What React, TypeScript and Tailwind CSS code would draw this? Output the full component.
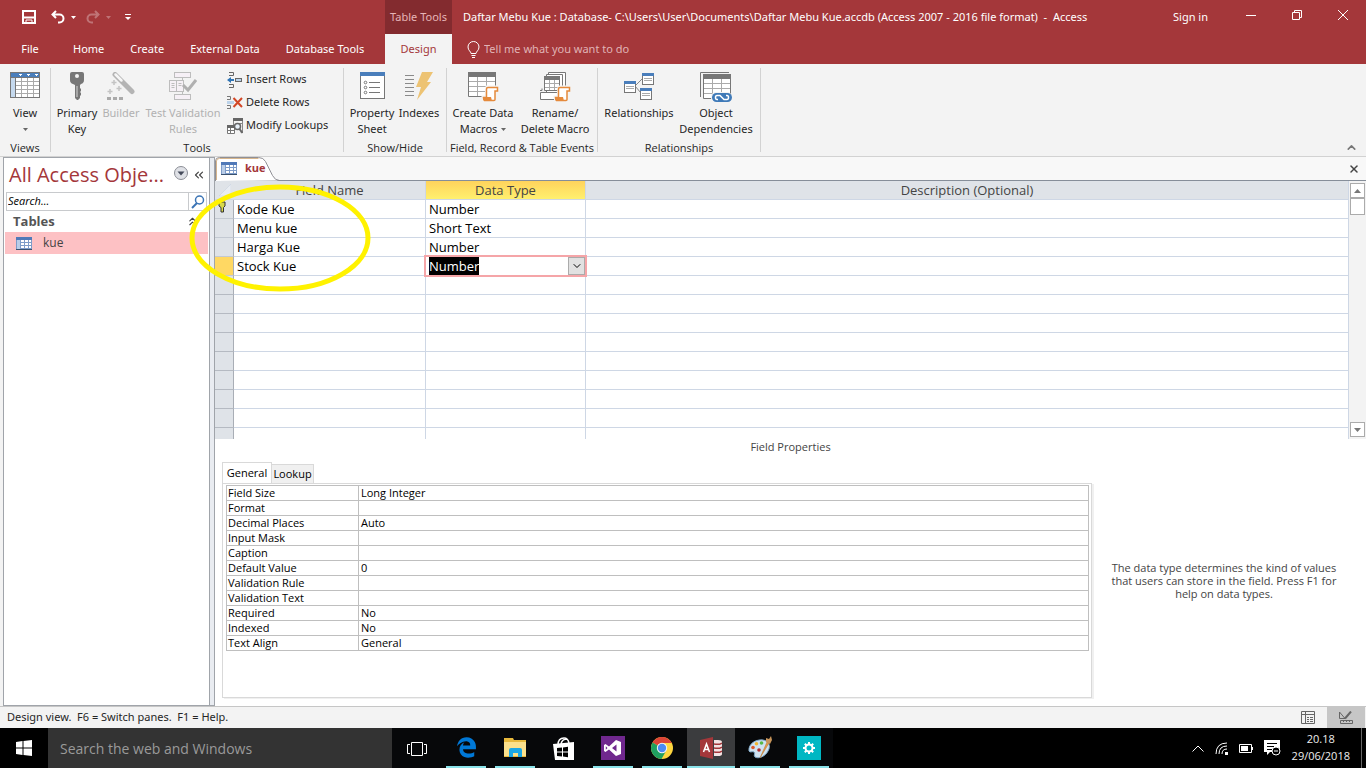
import { ReactNode } from 'react';
import { ChevronDown, ChevronUp, ChevronsLeft, ChevronsUp, X } from 'lucide-react';
import { FaEdgeLegacy } from 'react-icons/fa6';

interface Field {
    name: string;
    type: string;
    primary?: boolean;
}

const fields: Field[] = [
    { name: 'Kode Kue', type: 'Number', primary: true },
    { name: 'Menu kue', type: 'Short Text' },
    { name: 'Harga Kue', type: 'Number' },
    { name: 'Stock Kue', type: 'Number' },
];

const activeRow = 3;
const emptyRows = 9;

const properties = [
    ['Field Size', 'Long Integer'],
    ['Format', ''],
    ['Decimal Places', 'Auto'],
    ['Input Mask', ''],
    ['Caption', ''],
    ['Default Value', '0'],
    ['Validation Rule', ''],
    ['Validation Text', ''],
    ['Required', 'No'],
    ['Indexed', 'No'],
    ['Text Align', 'General'],
];

const menuTabs = ['Home', 'Create', 'External Data', 'Database Tools'];

/* ---------- ribbon icons ---------- */

function ViewIcon() {
    return (
        <svg width="30" height="26" viewBox="0 0 30 26" shapeRendering="crispEdges">
            <rect width="30" height="26" fill="#777" />
            <rect x="1" y="1" width="28" height="4" fill="#4a7ebb" />
            <rect x="1" y="6" width="4" height="19" fill="#c5d9ee" />
            <rect x="6" y="6" width="23" height="19" fill="#aaa" />
            {[6, 12, 18, 24].map((x) =>
                [6, 10, 14, 18, 22].map((y) => (
                    <rect key={`${x}-${y}`} x={x} y={y} width="5" height="3" fill="#fff" />
                )),
            )}
            <path d="M8 2h4l-2 2zM16 2h4l-2 2zM24 2h4l-2 2z" fill="#fff" />
        </svg>
    );
}

function KeyIcon() {
    return (
        <svg width="14" height="28" viewBox="0 0 14 28">
            <path
                d="M2 0h10q2 0 2 2v6q0 3-3 4l-1 1v3l1 1v2l-1 1 1 1v2l-1 1v2l-2 2H7l-2-2V13L3 12Q0 11 0 8V2q0-2 2-2z"
                fill="#777"
            />
            <circle cx="7" cy="4" r="2" fill="#f3f3f3" />
            <path d="M7 14v11" stroke="#d8d8d8" strokeWidth="1" />
        </svg>
    );
}

function BuilderIcon() {
    return (
        <svg width="30" height="28" viewBox="0 0 30 28" fill="none">
            <path d="M9 2.500l17 17" stroke="#b4b4b4" strokeWidth="5" strokeLinecap="round" />
            <path d="M9.500 2.500l6 6" stroke="#f6f6f6" strokeWidth="2.500" strokeLinecap="round" />
            <path
                d="M8 8v5M5.500 10.500h5M13 14v5M10.500 16.500h5M4 17v5M1.500 19.500h5"
                stroke="#c4c4c4"
                strokeWidth="1.500"
            />
            <path d="M1 25h4v3H1zM7 25h4v3H7zM13 25h4v3h-4z" fill="#aaa" />
        </svg>
    );
}

function ValidationIcon() {
    return (
        <svg width="28" height="28" viewBox="0 0 28 28" fill="#f6f0f6" stroke="#bdbdbd">
            <path d="M13.500 5v18" fill="none" />
            <rect x="5.500" y=".5" width="16" height="5" />
            <rect x="5.500" y="22.500" width="16" height="5" />
            <rect x=".5" y="8.500" width="14" height="11" />
            <path d="M7.500 8.500v11M2.500 11.500h3M2.500 13.500h3M2.500 15.500h3M9.500 11.500h3M9.500 13.500h3" fill="none" />
            <path d="M14 13l5 5 8-10" fill="none" stroke="#b0b0b0" strokeWidth="3" />
        </svg>
    );
}

function InsertRowsIcon() {
    return (
        <svg width="16" height="16" viewBox="0 0 16 16" fill="none" stroke="#666">
            <path d="M2 .5h4.500v3H2M2 15.500h4.500v-3H2" />
            <path d="M0 8l4-3v2h3v2H4v2z" fill="#2f74b5" stroke="none" />
            <rect x="8.500" y="6.500" width="6" height="3" fill="#bcd3ea" />
        </svg>
    );
}

function DeleteRowsIcon() {
    return (
        <svg width="16" height="14" viewBox="0 0 16 14" fill="none" stroke="#777">
            <path d="M0 .5h3.500v3H0M0 12.500h3.500v-3H0" />
            <rect x="0" y="5" width="7" height="3" fill="#bcd3ea" stroke="none" />
            <path d="M6.500 2l8.500 9M15 2l-8.500 9" stroke="#d24726" strokeWidth="2" />
        </svg>
    );
}

function LookupIcon() {
    return (
        <svg width="16" height="16" viewBox="0 0 16 16" fill="none">
            <path d="M6 0h10v3H6z" fill="#666" />
            <path d="M6.500 3v4M15.500 3v11h-2M9 5.500h6" stroke="#888" />
            <path d="M.5 8.500h7v7h-7z" fill="#fff" stroke="#777" />
            <path d="M0 7h7v3H0z" fill="#666" />
            <path d="M0 12.500h8M3.500 10v6" stroke="#777" />
            <circle cx="10.500" cy="8.500" r="3" fill="#e8f1fa" stroke="#666" strokeWidth="1.500" />
            <path d="M12.500 11l3 4" stroke="#666" strokeWidth="2" />
        </svg>
    );
}

function PropertyIcon() {
    return (
        <svg width="25" height="27" viewBox="0 0 25 27">
            <rect x=".5" y=".5" width="24" height="26" fill="#fff" stroke="#777" />
            <rect width="25" height="4" fill="#4a7ebb" />
            <g fill="none" stroke="#777">
                <circle cx="5.500" cy="10.500" r="1.300" />
                <circle cx="5.500" cy="15.500" r="1.300" />
                <circle cx="5.500" cy="20.500" r="1.300" />
                <path d="M9 10.500h11M9 15.500h11M9 20.500h11" />
            </g>
        </svg>
    );
}

function IndexesIcon() {
    return (
        <svg width="28" height="28" viewBox="0 0 28 28">
            <path
                d="M0 3.500h9M0 7.500h9M0 11.500h9M0 15.500h9M0 19.500h9M0 23.500h9"
                stroke="#8a8a8a"
                fill="none"
            />
            <path d="M17 0h11l-6 10h4L12 28l4-13h-5z" fill="#edc373" />
        </svg>
    );
}

function Scroll() {
    return (
        <>
            <path d="M19 15h11v4h-2v10H17q-2-1-2-4h3z" fill="#fff" stroke="#f3f3f3" strokeWidth="3" />
            <path
                d="M18.500 25.500V17q0-1.500 1.500-1.500h9.500V19H27v8.500q0 1-1 1H16.500q-1-1-1-3z"
                fill="#fff"
                stroke="#e58a3c"
                strokeWidth="1.500"
            />
            <path d="M15 25h8l1 4h-7q-2-1-2-4z" fill="#e58a3c" />
        </>
    );
}

function DataMacroIcon() {
    return (
        <svg width="31" height="30" viewBox="0 0 31 30">
            <path d="M.5.5h27v24H.5z" fill="#fff" stroke="#777" />
            <path d="M1 9.500h26M1 14.500h26M1 19.500h26M9.500 5v19M18.500 5v19" stroke="#aaa" />
            <path d="M0 0h28v5H0z" fill="#777" />
            <Scroll />
        </svg>
    );
}

function RenameIcon() {
    return (
        <svg width="31" height="30" viewBox="0 0 31 30">
            <path d="M8.500.5h17v20h-17z" fill="#fff" stroke="#777" />
            <path d="M6.500 2.500h16v18h-16z" fill="#fff" stroke="#777" />
            <path d="M4.500 4.500h15v14h-15z" fill="#fff" stroke="#777" />
            <path d="M5 11.500h14M5 15.500h14M9.500 8v10M14.500 8v10" stroke="#aaa" />
            <path d="M4 4h16v4H4z" fill="#777" />
            <path d="M.5 20.500h17v7H.5z" fill="#fff" stroke="#777" />
            <path d="M0 18.500h2v-2" fill="none" stroke="#777" />
            <Scroll />
        </svg>
    );
}

function RelationshipsIcon() {
    return (
        <svg width="30" height="28" viewBox="0 0 30 28">
            <path d="M11 14l8-8M11 14l6 7" stroke="#888" />
            {[
                [0, 9],
                [18, 1],
                [16, 16],
            ].map(([x, y]) => (
                <g key={x}>
                    <rect x={x + 0.5} y={y + 0.5} width="11" height="11" fill="#fff" stroke="#777" />
                    <rect x={x} y={y} width="12" height="3" fill="#4a7ebb" />
                    <path d={`M${x + 2} ${y + 5.5}h8M${x + 2} ${y + 7.5}h8`} stroke="#aaa" />
                </g>
            ))}
        </svg>
    );
}

function DependenciesIcon() {
    return (
        <svg width="32" height="31" viewBox="0 0 32 31">
            <path d="M.5 25V.5H29" fill="none" stroke="#777" />
            <path d="M3.500 2.500h27v24h-27z" fill="#fff" stroke="#777" />
            <path d="M4 11.500h26M4 16.500h26M4 21.500h26M12.500 7v19M21.500 7v19" stroke="#aaa" />
            <path d="M3 2h28v5H3z" fill="#777" />
            <rect x="11" y="20" width="21" height="11" rx="5" fill="#f3f3f3" />
            <rect x="12" y="21" width="20" height="9" rx="4.500" fill="#3f7ab8" />
            <path
                d="M18 27.500h-1q-1.500 0-1.500-2t1.500-2h3l4 4h3q1.500 0 1.500-2t-1.500-2h-1"
                fill="none"
                stroke="#fff"
                strokeWidth="1.500"
            />
        </svg>
    );
}

function SheetIcon() {
    return (
        <svg width="16" height="13" viewBox="0 0 16 13" shapeRendering="crispEdges">
            <rect width="16" height="13" fill="#7d9cc9" />
            <rect width="16" height="3" fill="#5079b8" />
            <rect x="1" y="3" width="3" height="9" fill="#b9cde8" />
            {[5, 9, 13].map((x) =>
                [3, 6, 9].map((y) => (
                    <rect key={`${x}-${y}`} x={x} y={y} width={x === 13 ? 2 : 3} height="2" fill="#fff" />
                )),
            )}
            <rect y="12" width="16" height="1" fill="#39516f" />
        </svg>
    );
}

/* ---------- ribbon pieces ---------- */

interface RibbonButtonProps {
    icon: ReactNode;
    label: string;
    second?: string;
    caret?: boolean;
    disabled?: boolean;
    width: string;
}

function Caret() {
    return (
        <svg width="5" height="3" viewBox="0 0 5 3" className="shrink-0">
            <path d="M0 0h5L2.500 3z" fill="#666" />
        </svg>
    );
}

function RibbonButton({ icon, label, second, caret, disabled, width }: RibbonButtonProps) {
    return (
        <button
            type="button"
            disabled={disabled}
            className={`flex flex-col items-center leading-4 whitespace-nowrap disabled:text-[#b1b1b1] ${width}`}
        >
            <span className="flex h-[37px] items-start pt-1">{icon}</span>
            <span>{label}</span>
            <span className="flex h-4 items-center gap-1">
                {second}
                {caret && <Caret />}
            </span>
        </button>
    );
}

function RibbonGroup({ title, children }: { title: string; children: ReactNode }) {
    return (
        <section className="flex">
            <div className="flex flex-col justify-between pt-1">
                <div className="flex">{children}</div>
                <h2 className="text-center font-['Open_Sans',sans-serif] leading-4 whitespace-nowrap">{title}</h2>
            </div>
            <div className="my-1 w-px bg-[#d2d2d2]" />
        </section>
    );
}

function SmallCommand({ icon, label }: { icon: ReactNode; label: string }) {
    return (
        <button type="button" className="flex h-[23px] items-center gap-[3px] whitespace-nowrap">
            <span className="flex w-4 justify-center">{icon}</span>
            {label}
        </button>
    );
}

/* ---------- window sections ---------- */

function TitleBar() {
    return (
        <header className="bg-[#a4373a] font-['Noto_Sans',sans-serif] text-[11px] text-white">
            <div className="flex h-[34px]">
                <div className="flex w-[385px] shrink-0 items-center pl-[22px]">
                    <button type="button" aria-label="Save">
                        <svg width="14" height="14" viewBox="0 0 14 14" fill="none" stroke="#fff" strokeWidth="2">
                            <path d="M1 1h12v12H1zM2 7.500h10" />
                            <path d="M4 13v-3h6v3" strokeWidth="1" />
                        </svg>
                    </button>
                    <button type="button" aria-label="Undo" className="ml-[15px] flex items-center gap-[6px]">
                        <svg width="14" height="14" viewBox="0 0 14 14" fill="none" stroke="#fff" strokeWidth="2">
                            <path d="M5 1L1.500 4.500 5 8M2 4.500h6.500a4 4 0 0 1 0 8H7" />
                        </svg>
                        <svg width="5" height="3" viewBox="0 0 5 3">
                            <path d="M0 0h5L2.500 3z" fill="#fff" />
                        </svg>
                    </button>
                    <button
                        type="button"
                        disabled
                        aria-label="Redo"
                        className="ml-[10px] flex items-center gap-[6px] opacity-30"
                    >
                        <svg width="14" height="14" viewBox="0 0 14 14" fill="none" stroke="#fff" strokeWidth="2">
                            <path d="M9 1l3.500 3.500L9 8M12 4.500H5.500a4 4 0 0 0 0 8H7" />
                        </svg>
                        <svg width="5" height="3" viewBox="0 0 5 3">
                            <path d="M0 0h5L2.500 3z" fill="#fff" />
                        </svg>
                    </button>
                    <button type="button" aria-label="Customize Quick Access Toolbar" className="ml-[14px]">
                        <svg width="6" height="6" viewBox="0 0 6 6">
                            <path d="M0 .5h6" stroke="#fff" />
                            <path d="M0 3h6L3 6z" fill="#fff" />
                        </svg>
                    </button>
                </div>
                <div className="flex w-[67px] shrink-0 items-center justify-center bg-[#832b2f] whitespace-nowrap text-[#e6b5b7]">
                    Table Tools
                </div>
                <h1 className="flex-1 self-center pl-[11px] whitespace-pre">
                    {'Daftar Mebu Kue : Database- C:\\Users\\User\\Documents\\Daftar Mebu Kue.accdb (Access 2007 - 2016 file format)  -  Access'}
                </h1>
                <button type="button" className="mr-5 whitespace-nowrap">
                    Sign in
                </button>
                <button type="button" aria-label="Minimize" className="flex w-[46px] items-center justify-center">
                    <svg width="10" height="10" viewBox="0 0 10 10">
                        <path d="M0 3.500h10" stroke="#fff" />
                    </svg>
                </button>
                <button type="button" aria-label="Restore" className="flex w-[46px] items-center justify-center pb-1">
                    <svg width="10" height="10" viewBox="0 0 10 10" fill="none" stroke="#fff">
                        <path d="M.5 2.500h7v7h-7zM2.500 2.500v-2h7v7h-2" />
                    </svg>
                </button>
                <button type="button" aria-label="Close" className="flex w-[46px] items-center justify-center pb-1">
                    <svg width="10" height="10" viewBox="0 0 10 10">
                        <path d="M0 0l10 10M10 0L0 10" stroke="#fff" />
                    </svg>
                </button>
            </div>
            <nav className="flex h-[30px]">
                <div className="flex w-[385px] shrink-0 items-center whitespace-nowrap">
                    <button type="button" className="w-[60px]">
                        File
                    </button>
                    {menuTabs.map((tab) => (
                        <button key={tab} type="button" className="px-[13px]">
                            {tab}
                        </button>
                    ))}
                </div>
                <button type="button" className="w-[67px] shrink-0 bg-[#f3f3f3] text-[#a4373a]">
                    Design
                </button>
                <label className="flex flex-1 items-center gap-1 pl-[15px]">
                    <svg width="13" height="17" viewBox="0 0 13 17" fill="none" stroke="#fff">
                        <path d="M4 12.500c0-2-3-3-3-6.500a5.500 5.500 0 0 1 11 0c0 3.500-3 4.500-3 6.500zM4.500 14.500h4M5 16.500h3" />
                    </svg>
                    <input
                        type="text"
                        aria-label="Tell me what you want to do"
                        placeholder="Tell me what you want to do"
                        className="w-60 bg-transparent placeholder:text-[#e0b4b6]"
                    />
                </label>
            </nav>
        </header>
    );
}

function Ribbon() {
    return (
        <div className="flex h-[93px] border-b border-[#d2d2d2] bg-[#f3f3f3] font-['Noto_Sans',sans-serif] text-[11px] text-[#262626]">
            <RibbonGroup title="Views">
                <RibbonButton icon={<ViewIcon />} label="View" caret width="w-[50px]" />
            </RibbonGroup>
            <RibbonGroup title="Tools">
                <div className="flex w-[292px] pl-1">
                    <RibbonButton icon={<KeyIcon />} label="Primary" second="Key" width="w-[44px]" />
                    <RibbonButton icon={<BuilderIcon />} label="Builder" disabled width="w-[44px]" />
                    <RibbonButton icon={<ValidationIcon />} label="Test Validation" second="Rules" disabled width="w-[80px]" />
                    <div className="flex flex-col pl-1">
                        <SmallCommand icon={<InsertRowsIcon />} label="Insert Rows" />
                        <SmallCommand icon={<DeleteRowsIcon />} label="Delete Rows" />
                        <SmallCommand icon={<LookupIcon />} label="Modify Lookups" />
                    </div>
                </div>
            </RibbonGroup>
            <RibbonGroup title="Show/Hide">
                <div className="flex w-[102px] pl-1">
                    <RibbonButton icon={<PropertyIcon />} label="Property" second="Sheet" width="w-[48px]" />
                    <RibbonButton icon={<IndexesIcon />} label="Indexes" width="w-[46px]" />
                </div>
            </RibbonGroup>
            <RibbonGroup title="Field, Record &amp; Table Events">
                <div className="flex w-[150px]">
                    <RibbonButton icon={<DataMacroIcon />} label="Create Data" second="Macros" caret width="w-[72px]" />
                    <RibbonButton icon={<RenameIcon />} label="Rename/" second="Delete Macro" width="w-[72px]" />
                </div>
            </RibbonGroup>
            <RibbonGroup title="Relationships">
                <div className="flex w-[162px] pl-[2px]">
                    <RibbonButton icon={<RelationshipsIcon />} label="Relationships" width="w-[78px]" />
                    <RibbonButton icon={<DependenciesIcon />} label="Object" second="Dependencies" width="w-[76px]" />
                </div>
            </RibbonGroup>
            <button type="button" aria-label="Collapse the Ribbon" className="mr-2 mb-[2px] ml-auto self-end">
                <ChevronUp size={13} strokeWidth={3} className="text-[#777]" />
            </button>
        </div>
    );
}

function NavigationPane() {
    return (
        <aside className="ml-[3px] flex w-[212px] shrink-0 border border-[#a0a4aa] bg-[#e9ecf1]">
            <div className="flex min-w-0 flex-1 flex-col border-r border-[#a0a4aa] bg-white">
                <div className="flex h-[34px] items-center pr-[3px] pl-[5px] text-[#a4373a]">
                    <h2 className="flex-1 text-[20px] leading-8 whitespace-nowrap">All Access Obje...</h2>
                    <button type="button" aria-label="Choose category" className="mr-1 mb-1">
                        <svg width="14" height="14" viewBox="0 0 14 14">
                            <circle cx="7" cy="7" r="6.500" fill="#dfe1e6" stroke="#8b8e96" />
                            <path d="M3.500 5.500h7L7 9.500z" fill="#444a5a" />
                        </svg>
                    </button>
                    <button type="button" aria-label="Shutter bar">
                        <ChevronsLeft size={14} className="text-[#444]" />
                    </button>
                </div>
                <form className="mx-[2px] flex h-[19px] border border-[#c8cacd]">
                    <input
                        type="text"
                        aria-label="Search"
                        placeholder="Search..."
                        className="min-w-0 flex-1 pl-px text-[11px] italic placeholder:text-black"
                    />
                    <button type="button" aria-label="Find" className="flex w-[18px] items-center justify-center border-l border-[#c8cacd]">
                        <svg width="14" height="14" viewBox="0 0 14 14" fill="none" stroke="#3b74b5">
                            <circle cx="8.500" cy="5" r="4" strokeWidth="1.500" />
                            <path d="M6 8l-5 5" strokeWidth="2" />
                        </svg>
                    </button>
                </form>
                <div className="flex h-[21px] items-center justify-between pr-[10px] pl-[9px]">
                    <h3 className="text-[13px] font-bold text-[#555]">Tables</h3>
                    <ChevronsUp size={13} className="text-[#444]" />
                </div>
                <a href="#kue" className="mx-px flex h-[22px] items-center gap-[11px] bg-[#fdc1c4] pl-[11px] text-[12px] text-[#444]">
                    <SheetIcon />
                    kue
                </a>
            </div>
            <div className="w-1 shrink-0" />
        </aside>
    );
}

function ScrollBar() {
    return (
        <div className="flex w-[17px] flex-col items-center bg-[#f3f3f3] pt-[2px] pb-[2px]">
            <button type="button" aria-label="Scroll up" className="flex h-[15px] w-[15px] items-center justify-center border border-[#ababab] bg-white">
                <svg width="7" height="4" viewBox="0 0 7 4">
                    <path d="M0 4h7L3.500 0z" fill="#777" />
                </svg>
            </button>
            <div className="h-[17px] w-[15px] border border-[#ababab] bg-white" />
            <button type="button" aria-label="Scroll down" className="mt-auto flex h-[15px] w-[15px] items-center justify-center border border-[#ababab] bg-white">
                <svg width="7" height="4" viewBox="0 0 7 4">
                    <path d="M0 0h7L3.500 4z" fill="#777" />
                </svg>
            </button>
        </div>
    );
}

function FieldGrid() {
    return (
        <div className="flex h-[258px] overflow-hidden">
            <table className="w-full flex-1 table-fixed border-separate border-spacing-0 text-[13px] leading-[18px]">
                <colgroup>
                    <col className="w-[19px]" />
                    <col className="w-[192px]" />
                    <col className="w-[160px]" />
                    <col />
                </colgroup>
                <thead>
                    <tr className="bg-[#dfe3e8] text-[#444]">
                        <th className="h-[19px] border-b border-[#ced7e5] p-0">
                            <svg width="12" height="12" viewBox="0 0 12 12" className="ml-1">
                                <path d="M12 0v12H0z" fill="#e9edf2" stroke="#c5cfdd" strokeWidth=".5" />
                            </svg>
                        </th>
                        <th className="border-r border-b border-[#ced7e5] p-0 font-normal">Field Name</th>
                        <th className="border-r border-b border-[#ced7e5] bg-linear-to-b from-[#ffd35c] to-[#fff06e] p-0 font-normal">
                            Data Type
                        </th>
                        <th className="border-r border-b border-[#ced7e5] p-0 font-normal">Description (Optional)</th>
                    </tr>
                </thead>
                <tbody>
                    {fields.map((field, i) => (
                        <tr key={field.name}>
                            <td
                                className={`h-[19px] border-r border-b border-r-[#a9aeb6] border-b-[#c3c9d2] p-0 ${i === activeRow ? 'bg-[#ffd863]' : 'bg-[#dfe3e8]'}`}
                            >
                                {field.primary && (
                                    <svg width="8" height="12" viewBox="0 0 8 12" className="mb-1 ml-[3px]">
                                        <path d="M1 1h6v4L5.500 6.500V11H3V6.500L1 5z" fill="#d8d84a" stroke="#333" />
                                    </svg>
                                )}
                            </td>
                            <td className="border-r border-b border-[#ced7e5] py-0 pr-0 pl-[3px]">{field.name}</td>
                            {i === activeRow ? (
                                <td className="border-r border-b border-[#ced7e5] p-0">
                                    <div className="relative h-[18px]">
                                        <div className="absolute -inset-x-[2px] -inset-y-[2px] flex items-center justify-between border-2 border-[#f5a5a8] bg-white pl-[3px]">
                                            <select
                                                aria-label="Data type of Stock Kue"
                                                className="h-[18px] appearance-none bg-black p-0 text-white [field-sizing:content]"
                                            >
                                                <option>{field.type}</option>
                                            </select>
                                            <button
                                                type="button"
                                                aria-label="Show types"
                                                className="flex h-[18px] w-[17px] items-center justify-center border border-[#ababab] bg-[#e1e1e1]"
                                            >
                                                <ChevronDown size={12} />
                                            </button>
                                        </div>
                                    </div>
                                </td>
                            ) : (
                                <td className="border-r border-b border-[#ced7e5] py-0 pr-0 pl-[3px]">{field.type}</td>
                            )}
                            <td className="border-r border-b border-[#ced7e5] p-0" />
                        </tr>
                    ))}
                    {Array.from({ length: emptyRows }, (_, i) => (
                        <tr key={i}>
                            <td className="h-[19px] border-r border-b border-r-[#a9aeb6] border-b-[#b5bac2] bg-[#dfe3e8] p-0" />
                            <td className="border-r border-b border-[#ced7e5] p-0" />
                            <td className="border-r border-b border-[#ced7e5] p-0" />
                            <td className="border-r border-b border-[#ced7e5] p-0" />
                        </tr>
                    ))}
                </tbody>
            </table>
            <ScrollBar />
        </div>
    );
}

function FieldProperties() {
    return (
        <section className="flex flex-1 flex-col text-[11px]">
            <h2 className="text-center leading-4 text-[#444]">Field Properties</h2>
            <div className="flex flex-1 pt-[7px] pb-2 pl-[7px]">
                <div className="flex flex-1 flex-col">
                    <div className="flex items-end">
                        <button
                            type="button"
                            className="-mb-px h-[22px] w-[50px] border border-b-0 border-[#d9d9d9] bg-white"
                        >
                            General
                        </button>
                        <button
                            type="button"
                            className="h-[19px] w-[42px] border border-b-0 border-l-0 border-[#d9d9d9] bg-[#f0f0f0]"
                        >
                            Lookup
                        </button>
                    </div>
                    <div className="flex-1 border border-[#d9d9d9] pt-px pr-[2px] pl-[3px] shadow-[2px_1px_0_#f0f0f0]">
                        <table className="w-full table-fixed border-collapse leading-[14px]">
                            <colgroup>
                                <col className="w-[132px]" />
                                <col />
                            </colgroup>
                            <tbody>
                                {properties.map(([label, value]) => (
                                    <tr key={label}>
                                        <th className="h-[15px] border border-[#bfbfbf] py-0 pr-0 pl-px text-left font-normal">
                                            {label}
                                        </th>
                                        <td className="border border-[#bfbfbf] py-0 pr-0 pl-[2px]">{value}</td>
                                    </tr>
                                ))}
                            </tbody>
                        </table>
                    </div>
                </div>
                <p className="flex w-[274px] items-center pt-px pr-[26px] pl-4 text-center leading-[13px] text-[#444]">
                    The data type determines the kind of values that users can store in the field. Press F1 for help on
                    data types.
                </p>
            </div>
        </section>
    );
}

function DocumentArea() {
    return (
        <main className="flex min-w-0 flex-1 flex-col bg-white">
            <div className="flex h-6 items-end justify-between border-b border-[#868e99] bg-[#f8f8f8]">
                <div className="relative h-[23px] w-[66px]">
                    <svg width="66" height="24" viewBox="0 0 66 24" className="absolute inset-0">
                        <path d="M.5 24V4q0-3.500 4-3.500h39q5 0 7 4l7 14q2.500 5 7 5" fill="#fff" stroke="#8f8f95" />
                        <path d="M1.500 23V4q0-2.500 3-2.500h39" fill="none" stroke="#d6b58c" />
                    </svg>
                    <button
                        type="button"
                        className="relative flex h-[23px] items-center gap-2 pl-[6px] text-[11px] font-bold text-[#a4373a]"
                    >
                        <SheetIcon />
                        kue
                    </button>
                </div>
                <button type="button" aria-label="Close kue" className="mr-[6px] mb-[5px]">
                    <X size={12} strokeWidth={3} className="text-[#444]" />
                </button>
            </div>
            <FieldGrid />
            <FieldProperties />
        </main>
    );
}

function StatusBar() {
    return (
        <footer className="flex h-[22px] items-center border-t border-[#c6c6c6] bg-[#f3f3f3] pr-px font-['Noto_Sans',sans-serif] text-[11px] text-[#262626]">
            <p className="flex-1 pl-[7px] whitespace-pre">Design view.  F6 = Switch panes.  F1 = Help.</p>
            <button type="button" aria-label="Datasheet View" className="flex h-full w-[38px] items-center justify-center">
                <svg width="14" height="13" viewBox="0 0 14 13" fill="none" stroke="#666">
                    <path d="M.5.5h13v12H.5zM0 3.500h14M4.500 0v13M6 6.500h2M9 6.500h3M6 8.500h2M9 8.500h3M6 10.500h2M9 10.500h3" />
                </svg>
            </button>
            <button type="button" aria-label="Design View" className="flex h-full w-[38px] items-center justify-center bg-[#c6c6c6]">
                <svg width="14" height="14" viewBox="0 0 14 14" fill="none" stroke="#666">
                    <path d="M.5 1v6.500H6zM1.500 9.500h12v3h-12zM4.500 10v1M7.500 10v1M10.500 10v1" />
                    <path d="M6 7.500l6-7" strokeWidth="2" />
                </svg>
            </button>
        </footer>
    );
}

/* ---------- Windows taskbar ---------- */

function TaskViewIcon() {
    return (
        <svg width="20" height="14" viewBox="0 0 20 14" fill="none" stroke="#fff">
            <path d="M4.500.5h11v13h-11zM3 2.500H.5v9H3M17 2.500h2.500v9H17" />
        </svg>
    );
}

function ExplorerIcon() {
    return (
        <svg width="22" height="19" viewBox="0 0 22 19">
            <path d="M0 0h9l1 2h12v17H0z" fill="#e8b93c" />
            <path d="M0 4h22v14H0z" fill="#fbe08b" />
            <path d="M5 19v-7q0-2 2-2h9q2 0 2 2v7h-4v-4H9v4z" fill="#1ca7e4" />
        </svg>
    );
}

function StoreIcon() {
    return (
        <svg width="22" height="24" viewBox="0 0 22 24">
            <path d="M5 8q0-7 6-7 4 0 5 5M8 7q1-5 6-5" fill="none" stroke="#fff" strokeWidth="1.500" />
            <path d="M0 7l21-2v18H2z" fill="#fff" />
            <path d="M4 11l5-.5v4H4zM10 10.400l5-.6v4.700h-5zM4 15.500h5v4L4 19zM10 15.500h5v4.700l-5-.6z" fill="#000" />
        </svg>
    );
}

function VisualStudioIcon() {
    return (
        <svg width="24" height="24" viewBox="0 0 24 24">
            <path d="M0 0h24v24H0z" fill="#70288e" />
            <path d="M4.500 8L8 10.500 15 4l5 2v12l-5 2-7-6.500L4.500 16 3 15V9z" fill="#fff" />
            <path d="M4.800 10.300v3.400l1.700-1.700zM15.500 8.500v7L11 12z" fill="#70288e" />
        </svg>
    );
}

function ChromeIcon() {
    return (
        <svg width="22" height="22" viewBox="0 0 22 22">
            <circle cx="11" cy="11" r="11" fill="#fdd53f" />
            <path d="M11 11L1.500 5.500A11 11 0 0 1 20.500 5.500L21 6H11z" fill="#dc4437" />
            <path d="M1.500 5.500A11 11 0 0 0 10.500 22l4.800-8.500L11 11z" fill="#1fa060" />
            <circle cx="11" cy="11" r="5.200" fill="#f5f5f5" />
            <circle cx="11" cy="11" r="4.200" fill="#4b8af4" />
        </svg>
    );
}

function AccessIcon() {
    return (
        <svg width="22" height="22" viewBox="0 0 22 22">
            <path d="M14 3h4q4 0 4 2v12q0 2-4 2h-4z" fill="#f3e3e3" />
            <path d="M14 7q5 1 8-1M14 11q5 1 8-1M14 15q5 1 8-1" fill="none" stroke="#a4373a" strokeWidth="1.500" />
            <path d="M0 3l13-3v22L0 19z" fill="#a4373a" />
            <path d="M3.500 15L6.500 7l3 8M4.500 12.500h4" fill="none" stroke="#fff" strokeWidth="1.500" />
        </svg>
    );
}

function PaintIcon() {
    return (
        <svg width="24" height="23" viewBox="0 0 24 23">
            <path
                d="M1 15C0 8 8 3 15 4c6 1 8 6 5 11-3 6-10 8-13 6-2-2 1-4-1-5-2-1-4 1-5-1z"
                fill="#cfe3f2"
                stroke="#7fa8c8"
            />
            <circle cx="5" cy="11.500" r="1.800" fill="#e05a2b" />
            <circle cx="8.500" cy="7.800" r="1.800" fill="#f2b632" />
            <circle cx="13.500" cy="7" r="1.800" fill="#57b847" />
            <circle cx="11" cy="14" r="1.800" fill="#b02a2a" />
            <path d="M12 22l7-16 2 1z" fill="#e39a4a" stroke="#b87428" strokeWidth=".5" />
            <path d="M18 2l3 1 2-3 1 4-2 4-4-2z" fill="#c8955a" />
        </svg>
    );
}

function SettingsIcon() {
    return (
        <svg width="24" height="24" viewBox="0 0 24 24" fill="none" stroke="#fff">
            <path d="M0 0h24v24H0z" fill="#00b7c3" stroke="none" />
            <circle cx="12" cy="12" r="3.500" strokeWidth="2" />
            <path
                d="M12 6v2.500M12 15.500V18M6 12h2.500M15.500 12H18M7.800 7.800l1.700 1.700M14.500 14.500l1.700 1.700M16.200 7.800l-1.700 1.700M9.500 14.500l-1.700 1.700"
                strokeWidth="2"
            />
        </svg>
    );
}

interface TaskItem {
    name: string;
    icon: ReactNode;
    active?: boolean;
    running?: boolean;
}

const tasks: TaskItem[] = [
    { name: 'Task View', icon: <TaskViewIcon /> },
    { name: 'Edge', icon: <FaEdgeLegacy size={21} color="#0078d7" />, running: true },
    { name: 'File Explorer', icon: <ExplorerIcon />, running: true },
    { name: 'Store', icon: <StoreIcon /> },
    { name: 'Visual Studio', icon: <VisualStudioIcon />, running: true },
    { name: 'Chrome', icon: <ChromeIcon />, running: true },
    { name: 'Access', icon: <AccessIcon />, running: true, active: true },
    { name: 'Paint', icon: <PaintIcon />, running: true },
    { name: 'Settings', icon: <SettingsIcon />, running: true },
];

function Taskbar() {
    return (
        <div className="flex h-10 bg-black text-white">
            <button type="button" aria-label="Start" className="flex w-12 items-center justify-center">
                <svg width="16" height="16" viewBox="0 0 16 16" fill="#fff">
                    <path d="M0 2l6.500-1v6.500H0zM7.500.9L16 0v7.500H7.500zM0 8.500h6.500V15L0 14zM7.500 8.500H16V16l-8.500-1z" />
                </svg>
            </button>
            <input
                type="text"
                aria-label="Search the web and Windows"
                placeholder="Search the web and Windows"
                className="w-[344px] bg-[#333] px-3 pt-[2px] text-sm placeholder:text-[#9a9a9a]"
            />
            <div className="flex gap-px bg-[#07080a] pl-px">
                {tasks.map((task) => (
                    <button
                        key={task.name}
                        type="button"
                        aria-label={task.name}
                        className={`flex w-12 flex-col items-center ${task.active ? 'bg-[#3b3c3e]' : ''}`}
                    >
                        <span className="flex flex-1 items-center pt-px">{task.icon}</span>
                        {task.running && (
                            <span className={`h-[2px] bg-[#8ae3ea] ${task.active ? 'w-12' : 'w-10'}`} />
                        )}
                    </button>
                ))}
            </div>
            <div className="ml-auto flex items-center gap-[11px] pr-1">
                <svg width="12" height="7" viewBox="0 0 12 7" fill="none" stroke="#fff">
                    <path d="M.5 6.500L6 1l5.500 5.500" />
                </svg>
                <svg width="13" height="13" viewBox="0 0 13 13" fill="none" stroke="#fff">
                    <path d="M1 12Q1 1 12 1M4 12q0-8 8-8M7 12q0-5 5-5" />
                    <path d="M10 10h3v3h-3z" fill="#fff" stroke="none" />
                </svg>
                <svg width="14" height="9" viewBox="0 0 14 9" fill="none" stroke="#fff">
                    <path d="M.5.5h12v8H.5zM13.500 3v3" />
                    <path d="M2 2h7v5H2z" fill="#fff" stroke="none" />
                </svg>
                <svg width="17" height="16" viewBox="0 0 17 16">
                    <path d="M0 0h16v12H6l-3 3v-3H0z" fill="#fff" />
                    <path d="M3 3.500h10M3 6.500h7M3 9.500h5" stroke="#000" />
                    <circle cx="12" cy="11" r="4" fill="#000" stroke="#fff" />
                    <path d="M10 11h4" stroke="#fff" />
                </svg>
                <div className="flex h-10 flex-col items-center justify-center border-r border-[#666] pr-[11px] pb-[2px] text-[11px] leading-[17px] text-[#eee]">
                    <time>20.18</time>
                    <time>29/06/2018</time>
                </div>
            </div>
        </div>
    );
}

export default function App() {
    return (
        <div className="flex min-h-screen flex-col bg-[#f3f3f3] font-['Open_Sans',sans-serif] text-black">
            <TitleBar />
            <Ribbon />
            <div className="relative flex flex-1">
                <NavigationPane />
                <DocumentArea />
                {/* highlighter ring around the field names */}
                <svg
                    width="182"
                    height="110"
                    viewBox="0 0 182 110"
                    className="pointer-events-none absolute top-[26px] left-[189px]"
                >
                    <ellipse cx="91" cy="55" rx="88" ry="51" fill="none" stroke="#fff200" strokeWidth="5" />
                </svg>
            </div>
            <StatusBar />
            <Taskbar />
        </div>
    );
}
